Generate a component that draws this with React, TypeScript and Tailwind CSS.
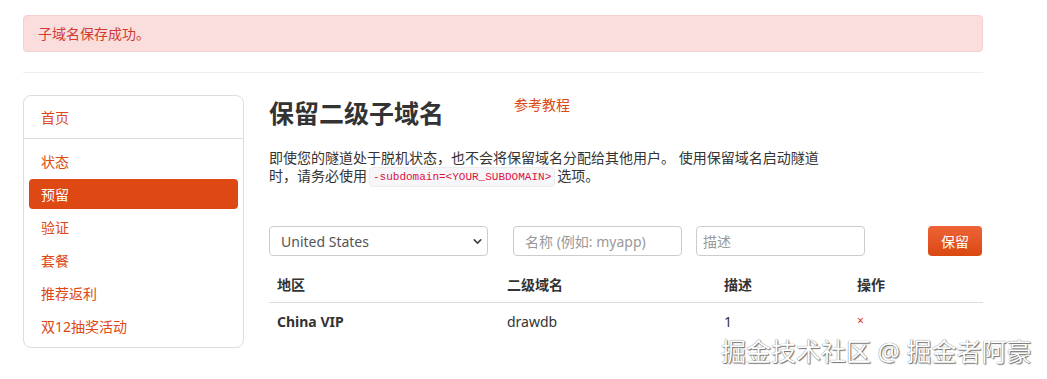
import { ChevronDown } from "lucide-react";

const navItems = ["状态", "预留", "验证", "套餐", "推荐返利", "双12抽奖活动"];

export default function App() {
  return (
    <div
      className="relative h-[379px] w-[1047px] overflow-hidden bg-white text-[14px] text-[#333]"
      style={{ fontFamily: '"Noto Sans", "Noto Sans CJK SC", sans-serif' }}
    >
      <div className="ml-[23px] w-[960px] pt-[15px]">
        {/* 提示 */}
        <div className="flex h-[37px] items-center rounded-[4px] border border-[#f4d0ce] bg-[#f9dedd] pl-[14px] text-[#d33a2f]">
          子域名保存成功。
        </div>

        <div className="mt-[20px] h-px bg-[#eeeeee]" />

        <div className="mt-[22px] flex gap-[25px]">
          {/* 侧边栏 */}
          <aside className="h-[253px] w-[221px] shrink-0 rounded-[8px] border border-[#dddddd]">
            <div className="flex h-[43px] items-center border-b border-[#dddddd] pl-[17px] pt-[1px] text-[#dd4814]">
              首页
            </div>
            <ul className="flex flex-col gap-[3px] px-[5px] pt-[7px]">
              {navItems.map((item) => (
                <li
                  key={item}
                  className={
                    item === "预留"
                      ? "flex h-[30px] items-center rounded-[4px] bg-[#dd4814] pl-[12px] text-white"
                      : "flex h-[30px] items-center pl-[12px] text-[#dd4814]"
                  }
                >
                  {item}
                </li>
              ))}
            </ul>
          </aside>

          {/* 主内容 */}
          <main className="w-[714px]">
            <div className="flex items-start pt-[1px]">
              <h2 className="w-[245px] text-[25px] font-bold leading-[34px] text-[#333]">保留二级子域名</h2>
              <a className="mt-[-2px] text-[14px] text-[#dd4814]">参考教程</a>
            </div>
            <p className="mt-[19px] max-w-[560px] leading-[18px]">
              即使您的隧道处于脱机状态，也不会将保留域名分配给其他用户。 使用保留域名启动隧道时，请务必使用
              <code
                className="mx-[2px] inline-block rounded-[4px] border border-[#ececf0] bg-[#f7f7f9] px-[3px] py-[2px] align-middle text-[11px] leading-[14px] text-[#dd1144]"
                style={{ fontFamily: '"Liberation Mono", monospace' }}
              >
                -subdomain=&lt;YOUR_SUBDOMAIN&gt;
              </code>
              选项。
            </p>

            {/* 表单 */}
            <div className="mt-[39px] flex h-[30px] items-stretch">
              <div className="flex w-[219px] items-center justify-between rounded-[4px] border border-[#cccccc] pl-[11px] pr-[3px] text-[#555]">
                <span>United States</span>
                <ChevronDown size={13} strokeWidth={3} className="text-[#444]" />
              </div>
              <div className="ml-[25px] flex w-[169px] items-center rounded-[4px] border border-[#cccccc] pl-[11px] text-[#999]">
                名称 (例如: myapp)
              </div>
              <div className="ml-[14px] flex w-[169px] items-center rounded-[4px] border border-[#cccccc] pl-[6px] text-[#999]">
                描述
              </div>
              <button className="ml-[63px] w-[54px] rounded-[4px] bg-gradient-to-b from-[#ee6335] to-[#d9480f] text-white">
                保留
              </button>
            </div>

            {/* 表格 */}
            <table className="mt-[10px] w-full border-collapse">
              <thead>
                <tr className="border-b border-[#dddddd] text-left">
                  <th className="h-[36px] w-[230px] px-[8px] font-bold">地区</th>
                  <th className="w-[217px] px-[8px] font-bold">二级域名</th>
                  <th className="w-[133px] px-[8px] font-bold">描述</th>
                  <th className="px-[8px] font-bold">操作</th>
                </tr>
              </thead>
              <tbody>
                <tr>
                  <td className="h-[37px] px-[8px] font-bold">China VIP</td>
                  <td className="px-[8px]">drawdb</td>
                  <td className="px-[8px]">1</td>
                  <td className="px-[8px] text-[12px] text-[#d9361e]">×</td>
                </tr>
              </tbody>
            </table>
          </main>
        </div>
      </div>

      {/* 水印 */}
      <div className="absolute left-[721px] top-[334px] text-[25px] leading-[34px] text-white [text-shadow:0_0_1px_#555,1px_1px_1px_#777]">
        掘金技术社区 @ 掘金者阿豪
      </div>
    </div>
  );
}
